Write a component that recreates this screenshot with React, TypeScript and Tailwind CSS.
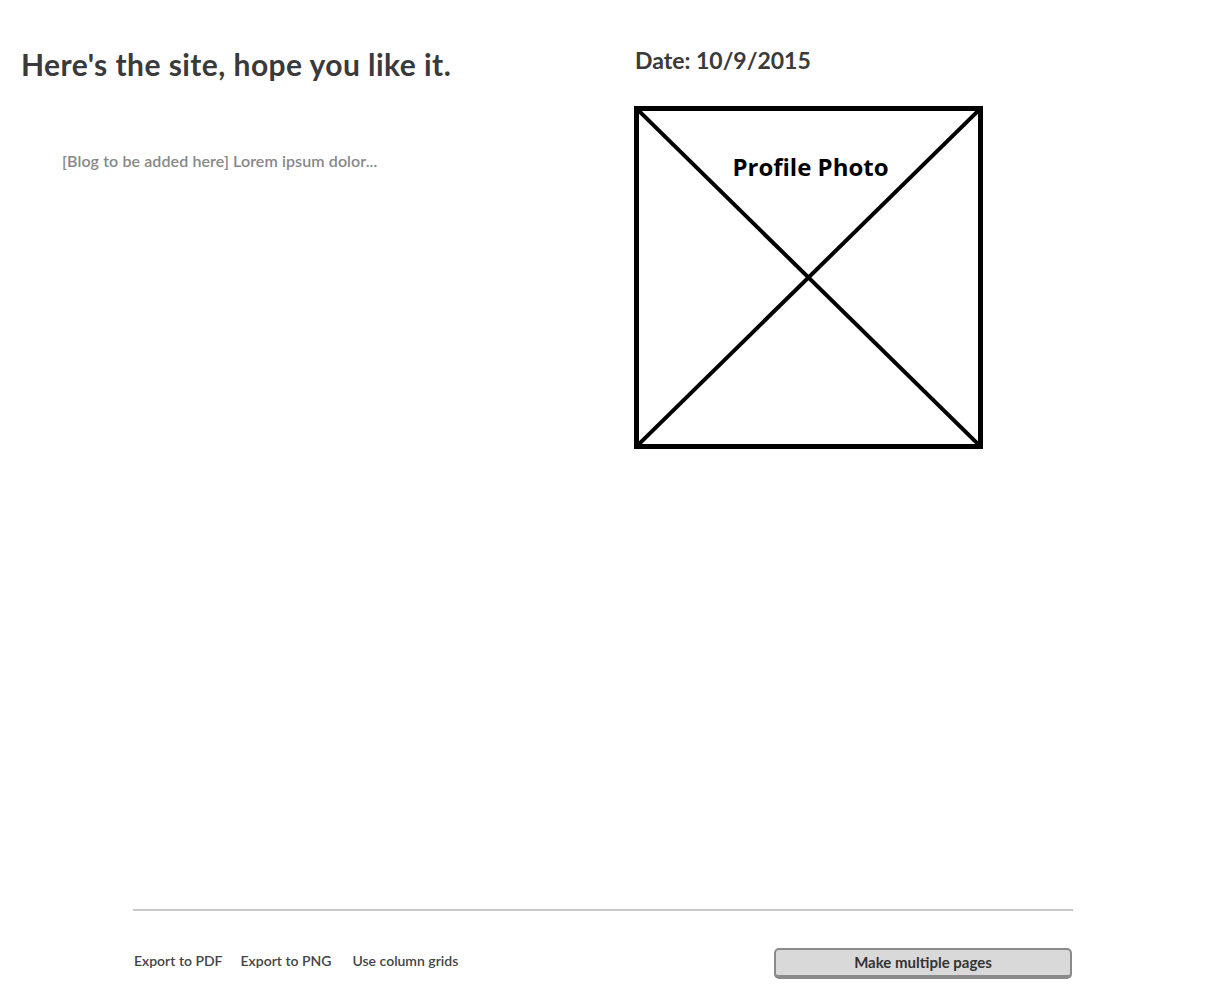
import React from "react";

export default function App() {
    return (
        <div className="w-[1206px] h-[1000px] bg-white flex flex-col font-['Lato',sans-serif]">
            <div className="flex flex-row h-[880px]">
                <div className="w-[614px] flex flex-col pl-[21px] pt-[44px]">
                    <h1 className="text-[30px] leading-[40px] tracking-[0.45px] font-bold text-[#3a3a3a]">Here's the site, hope you like it.</h1>
                    <p className="mt-[66px] ml-[41px] text-[16px] leading-[22px] tracking-[0.1px] text-[#888888] font-semibold">[Blog to be added here] Lorem ipsum dolor...</p>
                </div>
                <div className="flex flex-col pl-[20px] pt-[44px]">
                    <div className="text-[23px] leading-[32px] font-bold text-[#3a3a3a] pl-[1px]">Date: 10/9/2015</div>
                    <div className="relative mt-[30px] w-[349px] h-[343px] border-[5px] border-black">
                        <svg className="absolute inset-0" width="339" height="333" viewBox="0 0 339 333">
                            <line x1="0" y1="0" x2="339" y2="333" stroke="black" strokeWidth="4" />
                            <line x1="339" y1="0" x2="0" y2="333" stroke="black" strokeWidth="4" />
                        </svg>
                        <div className="relative flex justify-center pt-[41px] pl-[4px]">
                            <span className="bg-white px-[2px] text-[24px] leading-[30px] font-bold text-black font-['Open_Sans',sans-serif]">Profile Photo</span>
                        </div>
                    </div>
                </div>
            </div>
            <div className="mx-[133px] border-t-2 border-[#c8c8c8] mt-[29px]"></div>
            <div className="mx-[133px] mt-[37px] flex flex-row items-center justify-between">
                <div className="flex flex-row text-[14px] leading-[20px] text-[#444444] font-semibold pb-[6px] pl-[1px]">
                    <span>Export to PDF</span>
                    <span className="ml-[18px]">Export to PNG</span>
                    <span className="ml-[21px]">Use column grids</span>
                </div>
                <button className="w-[298px] h-[31px] mr-[1px] pb-[2px] rounded-[5px] border-2 border-b-4 border-[#8a8a8a] bg-[#d9d9d9] text-[15px] leading-[20px] font-bold text-[#333333]">Make multiple pages</button>
            </div>
        </div>
    );
}
